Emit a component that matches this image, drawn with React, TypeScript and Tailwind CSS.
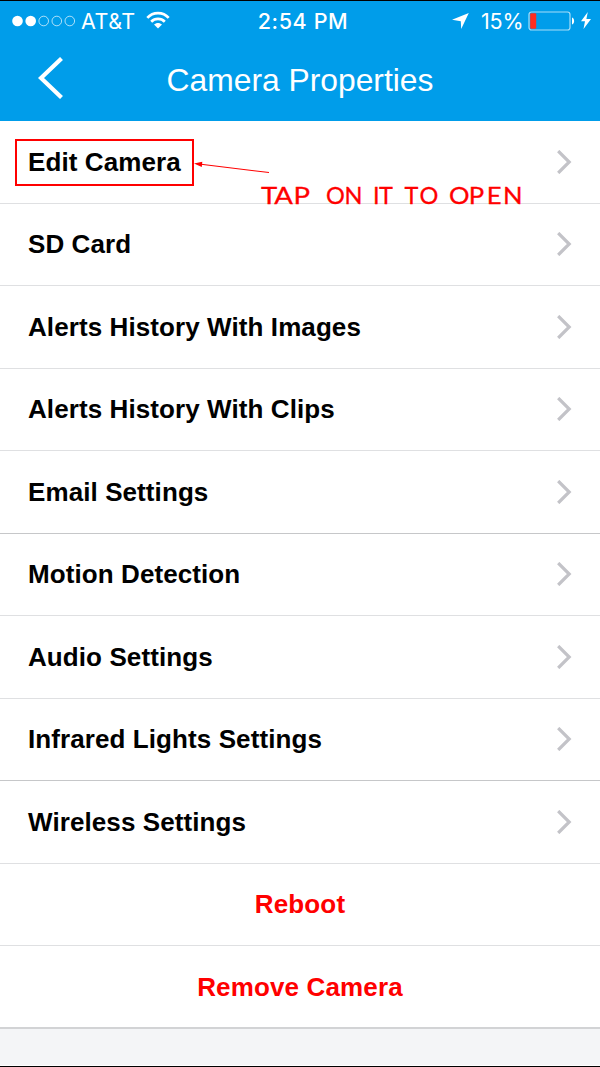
import React from "react";

const items = [
  { label: "Edit Camera", line: "border-[#dfe0e2]" },
  { label: "SD Card", line: "border-[#dfe0e2]" },
  { label: "Alerts History With Images", line: "border-[#dfe0e2]" },
  { label: "Alerts History With Clips", line: "border-[#dfe0e2]" },
  { label: "Email Settings", line: "border-[#c6c7c9]" },
  { label: "Motion Detection", line: "border-[#dfe0e2]" },
  { label: "Audio Settings", line: "border-[#dfe0e2]" },
  { label: "Infrared Lights Settings", line: "border-[#c6c7c9]" },
  { label: "Wireless Settings", line: "border-[#dfe0e2]" },
];

function Chevron() {
  return (
    <svg className="h-6 w-4" viewBox="0 0 16 24" fill="none" stroke="#c3c3c8" strokeWidth="3.2">
      <path d="M2.2 1 L13.2 12 L2.2 23" />
    </svg>
  );
}

function StatusBar() {
  return (
    <div className="grid h-[38px] grid-cols-[1fr_auto_1fr] items-center pt-px font-[Inter,sans-serif] text-[21.5px] leading-none text-white">
      <div className="flex items-center pl-3">
        <svg className="h-3 w-16" viewBox="0 0 64 12">
          <circle cx="5.5" cy="6" r="5.3" fill="white" />
          <circle cx="18.7" cy="6" r="5.3" fill="white" />
          <g fill="none" stroke="white" strokeOpacity="0.75" strokeWidth="0.9">
            <circle cx="31.7" cy="6" r="4.8" />
            <circle cx="44.8" cy="6" r="4.8" />
            <circle cx="57.8" cy="6" r="4.8" />
          </g>
        </svg>
        <span className="ml-[5px] w-[54px] pt-0.5 tracking-[0.5px]">AT&amp;T</span>
        <svg className="mb-px ml-[11px] h-[18px] w-6" viewBox="0 0 24 18" fill="none" stroke="white" strokeWidth="2.7">
          <path d="M1.3 6.8 C7 0.5 17 0.5 22.7 6.8" />
          <path d="M5.2 10.7 C9 6.9 15 6.9 18.8 10.7" />
          <path d="M8 13.6 C10.3 11.5 13.7 11.5 16 13.6 L12 17.6 Z" fill="white" stroke="none" />
        </svg>
      </div>
      <span className="pt-0.5 pl-1.5 font-medium tracking-[0.6px]">2:54 PM</span>
      <div className="flex items-center justify-end pr-[9px]">
        <svg className="mr-[12px] h-4 w-[17px]" viewBox="0 0 17 16" fill="white">
          <path d="M16.8 0 L9.2 16 L8.8 8.2 L0 6.8 Z" />
        </svg>
        <span className="w-[42px] pt-0.5 text-right tracking-[-0.2px]">15%</span>
        <svg className="ml-[5px] h-5 w-[48px]" viewBox="0 0 48 20">
          <rect x="1" y="1" width="41" height="18" rx="2.5" fill="none" stroke="white" strokeOpacity="0.65" strokeWidth="1.2" />
          <rect x="2.2" y="2.2" width="6" height="15.6" rx="1" fill="#ff2d20" />
          <path d="M44 6.5 C46.8 7.3 46.8 12.7 44 13.5 Z" fill="white" />
        </svg>
        <svg className="ml-[5px] h-[17px] w-[10px]" viewBox="0 0 10 17" fill="white">
          <path d="M6.8 0 L0 9.2 H4 L2.5 17 L10 6.9 H5.4 Z" />
        </svg>
      </div>
    </div>
  );
}

function Annotation() {
  return (
    <svg className="pointer-events-none absolute top-[129px] left-0 h-20 w-[600px]" viewBox="0 130 600 80">
      <rect x="16" y="140" width="177" height="45" fill="none" stroke="#ff0000" strokeWidth="2" />
      <path d="M201 164.3 L269 172.5" stroke="#ff0000" strokeWidth="1.1" />
      <path d="M194 163.4 L202.3 161.8 L201.8 166.9 Z" fill="#ff0000" />
      <g fill="#ff0000" stroke="#ff0000" strokeWidth="0.3" fontFamily="Lato, sans-serif" fontSize="23.5">
        <text transform="translate(261 203.5) scale(1.17 1)" x="0 11.3 27.7" y="0">TAP</text>
        <text x="326 344.5" y="203.5">ON</text>
        <text x="373 379" y="203.5">IT</text>
        <text x="404.5 419.5" y="203.5">TO</text>
        <text transform="translate(449 203.5) scale(1.09 1)" x="0 18.2 34.6 49.5" y="0">OPEN</text>
      </g>
    </svg>
  );
}

export default function App() {
  return (
    <div className="relative flex h-[1067px] w-[600px] flex-col overflow-hidden border-y border-black bg-white font-['Liberation_Sans',Arial,sans-serif]">
      <header className="h-[120px] shrink-0 bg-[#009dea] text-white">
        <StatusBar />
        <div className="grid h-[82px] grid-cols-[100px_1fr_100px] items-center">
          <svg className="mb-1 ml-[38px] h-[42px] w-[26px]" viewBox="0 0 26 42" fill="none" stroke="white" strokeWidth="4.2">
            <path d="M23.5 1.5 L3 21 L23.5 40.5" />
          </svg>
          <h1 className="pt-0.5 text-center text-[31.8px] leading-none">Camera Properties</h1>
        </div>
      </header>
      <main className="shrink-0 text-[26px] font-bold tracking-[0.09px]">
        {items.map((item) => (
          <div key={item.label} className={`flex h-[82.5px] items-center justify-between border-b pr-7 pl-7 text-black ${item.line}`}>
            <span className="pt-px">{item.label}</span>
            <Chevron />
          </div>
        ))}
        <div className="flex h-[82.5px] items-center justify-center border-b border-[#dfe0e2] pt-px tracking-[0.15px] text-[#ff0000]">Reboot</div>
        <div className="flex h-[82.5px] items-center justify-center border-b-2 border-[#d2d3d5] pt-[3px] tracking-[0.15px] text-[#ff0000]">Remove Camera</div>
      </main>
      <footer className="flex-1 border-b border-white bg-[#f4f5f7]" />
      <Annotation />
    </div>
  );
}
